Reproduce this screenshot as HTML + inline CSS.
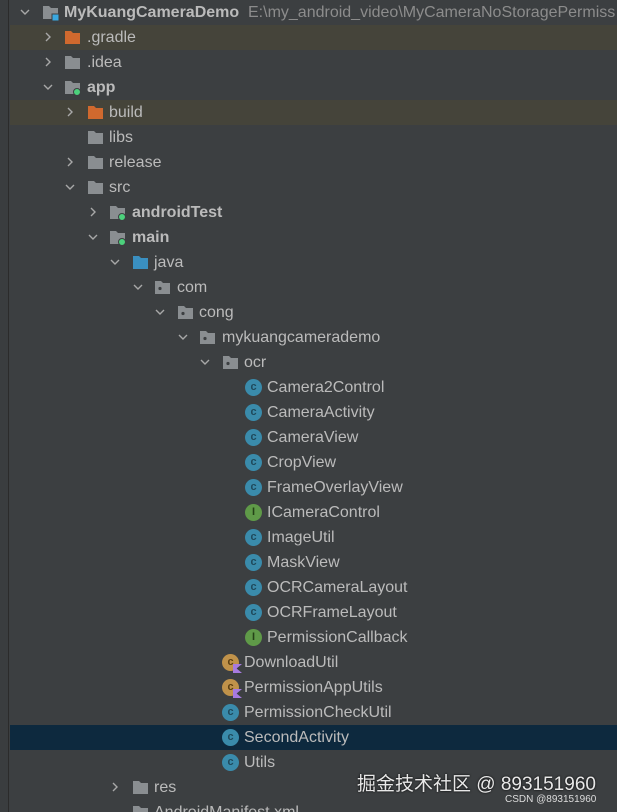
<!DOCTYPE html>
<html><head><meta charset="utf-8"><style>
*{margin:0;padding:0;box-sizing:border-box}
html,body{width:617px;height:812px;overflow:hidden}
body{background:#3c3f41;font-family:"Liberation Sans","Noto Sans CJK SC",sans-serif;font-size:16px;color:#bbbbbb;position:relative}
.strip{position:absolute;left:0;top:0;width:9px;height:812px;background:#3a3d3f;border-right:1px solid #2b2b2b}
.hl{position:absolute;left:10px;width:607px;height:25px}
.r{position:absolute;height:25px;line-height:26px;white-space:nowrap}
.b{font-weight:bold}
.ch{position:absolute;width:10px;height:10px;top:7px}
.ic{position:absolute;top:4px;width:17px;height:17px}
.t{position:absolute;top:0}
.c{position:absolute;top:4px;width:17px;height:17px;border-radius:50%;background:#3a8bab;color:#1f4a5c;font-size:11px;line-height:17px;text-align:center;font-weight:bold}
.i{background:#5f9a48;color:#244217}
.k{background:#c0924a;color:#5a3e12}
.k::after{content:"";position:absolute;right:-3px;bottom:-2px;width:9px;height:9px;background:#a77ae0;clip-path:polygon(0 0,100% 0,40% 50%,100% 100%,0 100%)}
.wm{position:absolute;font-size:19px;color:#e8e8e8;left:357px;top:769px;text-shadow:0 0 2px #000}
.wm2{position:absolute;font-size:10px;color:#dddddd;left:505px;top:794px}
</style></head><body>
<div class="strip"></div>
<div class="hl" style="top:25px;background:#45443a"></div>
<div class="hl" style="top:100px;background:#45443a"></div>
<div class="hl" style="top:725px;background:#0d293e"></div>
<svg width="0" height="0" style="position:absolute"><defs>
<symbol id="cr" viewBox="0 0 10 10"><polyline points="3,1 7,5 3,9" fill="none" stroke="#a8a8a8" stroke-width="1.4"/></symbol>
<symbol id="cd" viewBox="0 0 10 10"><polyline points="1,3 5,7 9,3" fill="none" stroke="#a8a8a8" stroke-width="1.4"/></symbol>
<symbol id="fg" viewBox="0 0 17 17"><path d="M1 2h6l2 2h7v11H1z" fill="#8a8e91"/></symbol>
<symbol id="fo" viewBox="0 0 17 17"><path d="M1 2h6l2 2h7v11H1z" fill="#d0692e"/></symbol>
<symbol id="fb" viewBox="0 0 17 17"><path d="M1 2h6l2 2h7v11H1z" fill="#3a8fc0"/></symbol>
<symbol id="fp" viewBox="0 0 17 17"><path d="M1 2h6l2 2h7v11H1z" fill="#8a8e91"/><circle cx="6" cy="9.5" r="1.6" fill="#3c3f41"/></symbol>
<symbol id="fm" viewBox="0 0 17 17"><path d="M1 2h6l2 2h7v11H1z" fill="#8a8e91"/><circle cx="13" cy="13" r="3.5" fill="#4cd17c" stroke="#3c3f41" stroke-width="1"/></symbol>
<symbol id="fj" viewBox="0 0 17 17"><path d="M1 2h6l2 2h7v11H1z" fill="#8a8e91"/><rect x="10" y="10" width="7" height="7" fill="#3aa8e0" stroke="#3c3f41" stroke-width="1"/></symbol>
</defs></svg>

<div class="r b" style="top:0;left:0;width:617px">
<svg class="ch" style="left:20px"><use href="#cd"/></svg><svg class="ic" style="left:42px"><use href="#fj"/></svg><span class="t" style="left:64px">MyKuangCameraDemo</span><span class="t" style="left:248px;font-weight:normal;color:#8c8c8c">E:\my_android_video\MyCameraNoStoragePermiss</span></div>

<div class="r" style="top:25px"><svg class="ch" style="left:43px"><use href="#cr"/></svg><svg class="ic" style="left:64px"><use href="#fo"/></svg><span class="t" style="left:87px">.gradle</span></div>
<div class="r" style="top:50px"><svg class="ch" style="left:43px"><use href="#cr"/></svg><svg class="ic" style="left:64px"><use href="#fg"/></svg><span class="t" style="left:87px">.idea</span></div>
<div class="r b" style="top:75px"><svg class="ch" style="left:43px"><use href="#cd"/></svg><svg class="ic" style="left:64px"><use href="#fm"/></svg><span class="t" style="left:87px">app</span></div>
<div class="r" style="top:100px"><svg class="ch" style="left:65px"><use href="#cr"/></svg><svg class="ic" style="left:87px"><use href="#fo"/></svg><span class="t" style="left:109px">build</span></div>
<div class="r" style="top:125px"><svg class="ic" style="left:87px"><use href="#fg"/></svg><span class="t" style="left:109px">libs</span></div>
<div class="r" style="top:150px"><svg class="ch" style="left:65px"><use href="#cr"/></svg><svg class="ic" style="left:87px"><use href="#fg"/></svg><span class="t" style="left:109px">release</span></div>
<div class="r" style="top:175px"><svg class="ch" style="left:65px"><use href="#cd"/></svg><svg class="ic" style="left:87px"><use href="#fg"/></svg><span class="t" style="left:109px">src</span></div>
<div class="r b" style="top:200px"><svg class="ch" style="left:88px"><use href="#cr"/></svg><svg class="ic" style="left:109px"><use href="#fm"/></svg><span class="t" style="left:132px">androidTest</span></div>
<div class="r b" style="top:225px"><svg class="ch" style="left:88px"><use href="#cd"/></svg><svg class="ic" style="left:109px"><use href="#fm"/></svg><span class="t" style="left:132px">main</span></div>
<div class="r" style="top:250px"><svg class="ch" style="left:110px"><use href="#cd"/></svg><svg class="ic" style="left:132px"><use href="#fb"/></svg><span class="t" style="left:154px">java</span></div>
<div class="r" style="top:275px"><svg class="ch" style="left:133px"><use href="#cd"/></svg><svg class="ic" style="left:154px"><use href="#fp"/></svg><span class="t" style="left:177px">com</span></div>
<div class="r" style="top:300px"><svg class="ch" style="left:155px"><use href="#cd"/></svg><svg class="ic" style="left:177px"><use href="#fp"/></svg><span class="t" style="left:199px">cong</span></div>
<div class="r" style="top:325px"><svg class="ch" style="left:178px"><use href="#cd"/></svg><svg class="ic" style="left:199px"><use href="#fp"/></svg><span class="t" style="left:222px">mykuangcamerademo</span></div>
<div class="r" style="top:350px"><svg class="ch" style="left:200px"><use href="#cd"/></svg><svg class="ic" style="left:222px"><use href="#fp"/></svg><span class="t" style="left:244px">ocr</span></div>

<div class="r" style="top:375px"><span class="c" style="left:245px">c</span><span class="t" style="left:267px">Camera2Control</span></div>
<div class="r" style="top:400px"><span class="c" style="left:245px">c</span><span class="t" style="left:267px">CameraActivity</span></div>
<div class="r" style="top:425px"><span class="c" style="left:245px">c</span><span class="t" style="left:267px">CameraView</span></div>
<div class="r" style="top:450px"><span class="c" style="left:245px">c</span><span class="t" style="left:267px">CropView</span></div>
<div class="r" style="top:475px"><span class="c" style="left:245px">c</span><span class="t" style="left:267px">FrameOverlayView</span></div>
<div class="r" style="top:500px"><span class="c i" style="left:245px">I</span><span class="t" style="left:267px">ICameraControl</span></div>
<div class="r" style="top:525px"><span class="c" style="left:245px">c</span><span class="t" style="left:267px">ImageUtil</span></div>
<div class="r" style="top:550px"><span class="c" style="left:245px">c</span><span class="t" style="left:267px">MaskView</span></div>
<div class="r" style="top:575px"><span class="c" style="left:245px">c</span><span class="t" style="left:267px">OCRCameraLayout</span></div>
<div class="r" style="top:600px"><span class="c" style="left:245px">c</span><span class="t" style="left:267px">OCRFrameLayout</span></div>
<div class="r" style="top:625px"><span class="c i" style="left:245px">I</span><span class="t" style="left:267px">PermissionCallback</span></div>

<div class="r" style="top:650px"><span class="c k" style="left:222px">c</span><span class="t" style="left:244px">DownloadUtil</span></div>
<div class="r" style="top:675px"><span class="c k" style="left:222px">c</span><span class="t" style="left:244px">PermissionAppUtils</span></div>
<div class="r" style="top:700px"><span class="c" style="left:222px">c</span><span class="t" style="left:244px">PermissionCheckUtil</span></div>
<div class="r" style="top:725px"><span class="c" style="left:222px">c</span><span class="t" style="left:244px">SecondActivity</span></div>
<div class="r" style="top:750px"><span class="c" style="left:222px">c</span><span class="t" style="left:244px">Utils</span></div>
<div class="r" style="top:775px"><svg class="ch" style="left:110px"><use href="#cr"/></svg><svg class="ic" style="left:132px"><use href="#fg"/></svg><span class="t" style="left:154px">res</span></div>
<div class="r" style="top:800px"><svg class="ic" style="left:132px"><use href="#fg"/></svg><span class="t" style="left:154px">AndroidManifest.xml</span></div>

<div class="wm">掘金技术社区 @ 893151960</div>
<div class="wm2">CSDN @893151960</div>
</body></html>
